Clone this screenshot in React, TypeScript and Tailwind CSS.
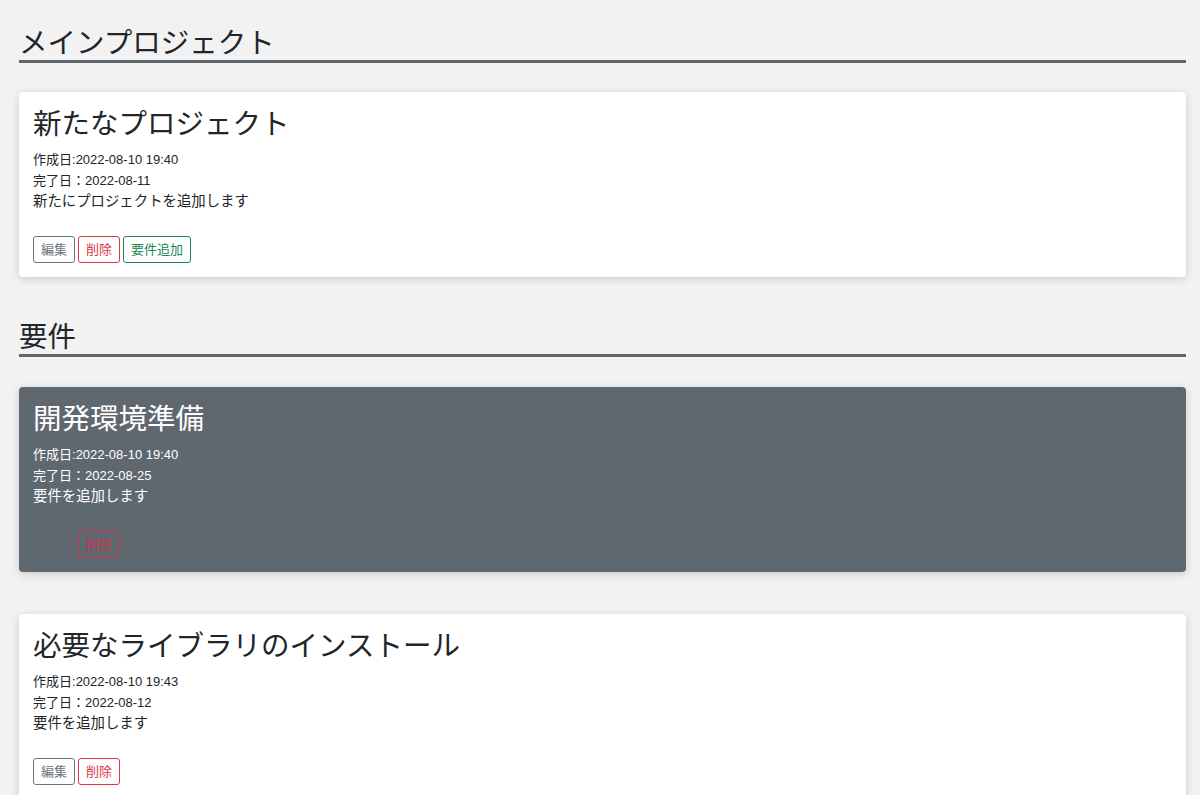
import React from "react";

// Card data for the requirement list
interface Item {
  title: string;
  created: string;
  due: string;
  body: string;
  active?: boolean;
  addButton?: boolean;
}

const main: Item = {
  title: "新たなプロジェクト",
  created: "2022-08-10 19:40",
  due: "2022-08-11",
  body: "新たにプロジェクトを追加します",
  addButton: true,
};

const requirements: Item[] = [
  {
    title: "開発環境準備",
    created: "2022-08-10 19:40",
    due: "2022-08-25",
    body: "要件を追加します",
    active: true,
  },
  {
    title: "必要なライブラリのインストール",
    created: "2022-08-10 19:43",
    due: "2022-08-12",
    body: "要件を追加します",
  },
];

const SectionTitle: React.FC<{ text: string; className?: string }> = ({ text, className }) => (
  <h2
    className={`text-[28.5px] leading-[34px] font-normal text-[#212529] border-b-[3px] border-[#5f676e] ${className ?? ""}`}
  >
    {text}
  </h2>
);

const Card: React.FC<{ item: Item; className?: string }> = ({ item, className }) => {
  const dark = item.active;
  return (
    <div
      className={`rounded-[4px] px-[14px] pt-[15px] pb-[14px] shadow-[0_2px_8px_rgba(0,0,0,0.16)] ${
        dark ? "bg-[#5f686f] text-white" : "bg-white text-[#212529]"
      } ${className ?? ""}`}
    >
      <h3 className="text-[28.5px] leading-[34px] font-normal">{item.title}</h3>
      <p className="mt-[8px] text-[13px] leading-[21px]">作成日:{item.created}</p>
      <p className="text-[13px] leading-[21px]">完了日：{item.due}</p>
      <p className="text-[14.4px] leading-[21px]">{item.body}</p>
      {/* Buttons */}
      <div className="mt-[24px] flex gap-[3px]">
        <button
          className={`h-[27px] px-[7px] text-[13px] rounded-[3px] border border-solid border-[#6c757d] bg-transparent text-[#6c757d] ${
            dark ? "invisible" : ""
          }`}
        >
          編集
        </button>
        <button
          className={`h-[27px] px-[7px] text-[13px] rounded-[3px] border border-solid bg-transparent ${
            dark ? "border-[#c8334a] text-[#c8334a]" : "border-[#dc3545] text-[#dc3545]"
          }`}
        >
          削除
        </button>
        {item.addButton && (
          <button className="h-[27px] px-[7px] text-[13px] rounded-[3px] border border-solid border-[#198754] bg-transparent text-[#198754]">
            要件追加
          </button>
        )}
      </div>
    </div>
  );
};

const App: React.FC = () => {
  return (
    <div
      className="min-h-screen bg-[#f2f2f2] pl-[19px] pr-[14px] pt-[26px] pb-10"
      style={{ fontFamily: '"Liberation Sans", "Noto Sans CJK JP", sans-serif' }}
    >
      <SectionTitle text="メインプロジェクト" />
      <Card item={main} className="mt-[29px]" />

      <SectionTitle text="要件" className="mt-[43px]" />
      <div className="mt-[30px] flex flex-col gap-[42px]">
        {requirements.map((r, i) => (
          <Card key={i} item={r} />
        ))}
      </div>
    </div>
  );
};

export default App;
